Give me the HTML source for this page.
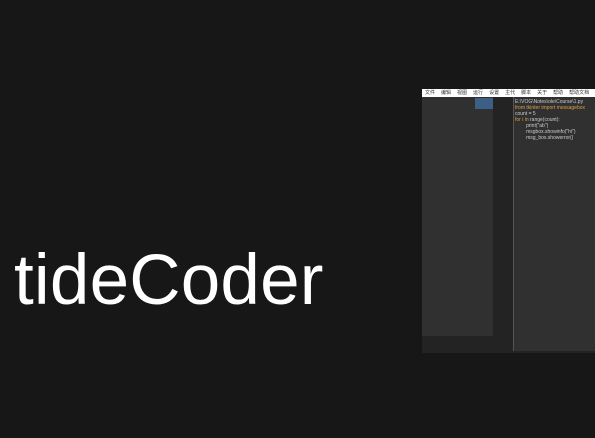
<!DOCTYPE html>
<html><head><meta charset="utf-8"><style>
html,body{margin:0;padding:0;width:595px;height:438px;background:#171717;overflow:hidden;position:relative;font-family:"Liberation Sans","Noto Sans CJK SC",sans-serif}
.t{position:absolute;left:14px;top:239px;font-size:71px;line-height:84px;color:#fff;white-space:nowrap;letter-spacing:0.2px}
.win{position:absolute;left:422px;top:89px;width:173px;height:264px;background:#232323}
.menu{position:absolute;left:0;top:0;width:173px;height:8px;background:#fff;font-size:5px;line-height:8px;color:#333;white-space:nowrap;overflow:hidden}
.menu span{margin-left:3px;margin-right:3px}
.lp{position:absolute;left:0;top:8px;width:71px;height:239px;background:#303030}
.btn{position:absolute;left:53px;top:9px;width:18px;height:11px;background:#3b5f85}
.ed{position:absolute;left:91px;top:8px;width:82px;height:254px;background:#303030;border-left:1px solid #555}
.code{position:absolute;left:93px;top:10px;font-size:5px;line-height:6px;color:#ccc;white-space:pre}
.o{color:#d9a14a}
</style></head><body>
<div class="t">tideCoder</div>
<div class="win">
<div class="menu"><span>文件</span><span>编辑</span><span>视图</span><span>运行</span><span>设置</span><span>主代</span><span>脚本</span><span>关于</span><span>帮助</span><span>帮助文档</span></div>
<div class="lp"></div>
<div class="btn"></div>
<div class="ed"></div>
<div class="code">E:\VOG\Notes\ole\Course\1.py
<span class="o">from tkinter import messagebox</span>
count = 5
<span class="o">for i in</span> range(count):
        print(&quot;ab&quot;)
        msgbox.showinfo(&quot;hi&quot;)
        msg_box.showerror()</div>
</div>
</body></html>
